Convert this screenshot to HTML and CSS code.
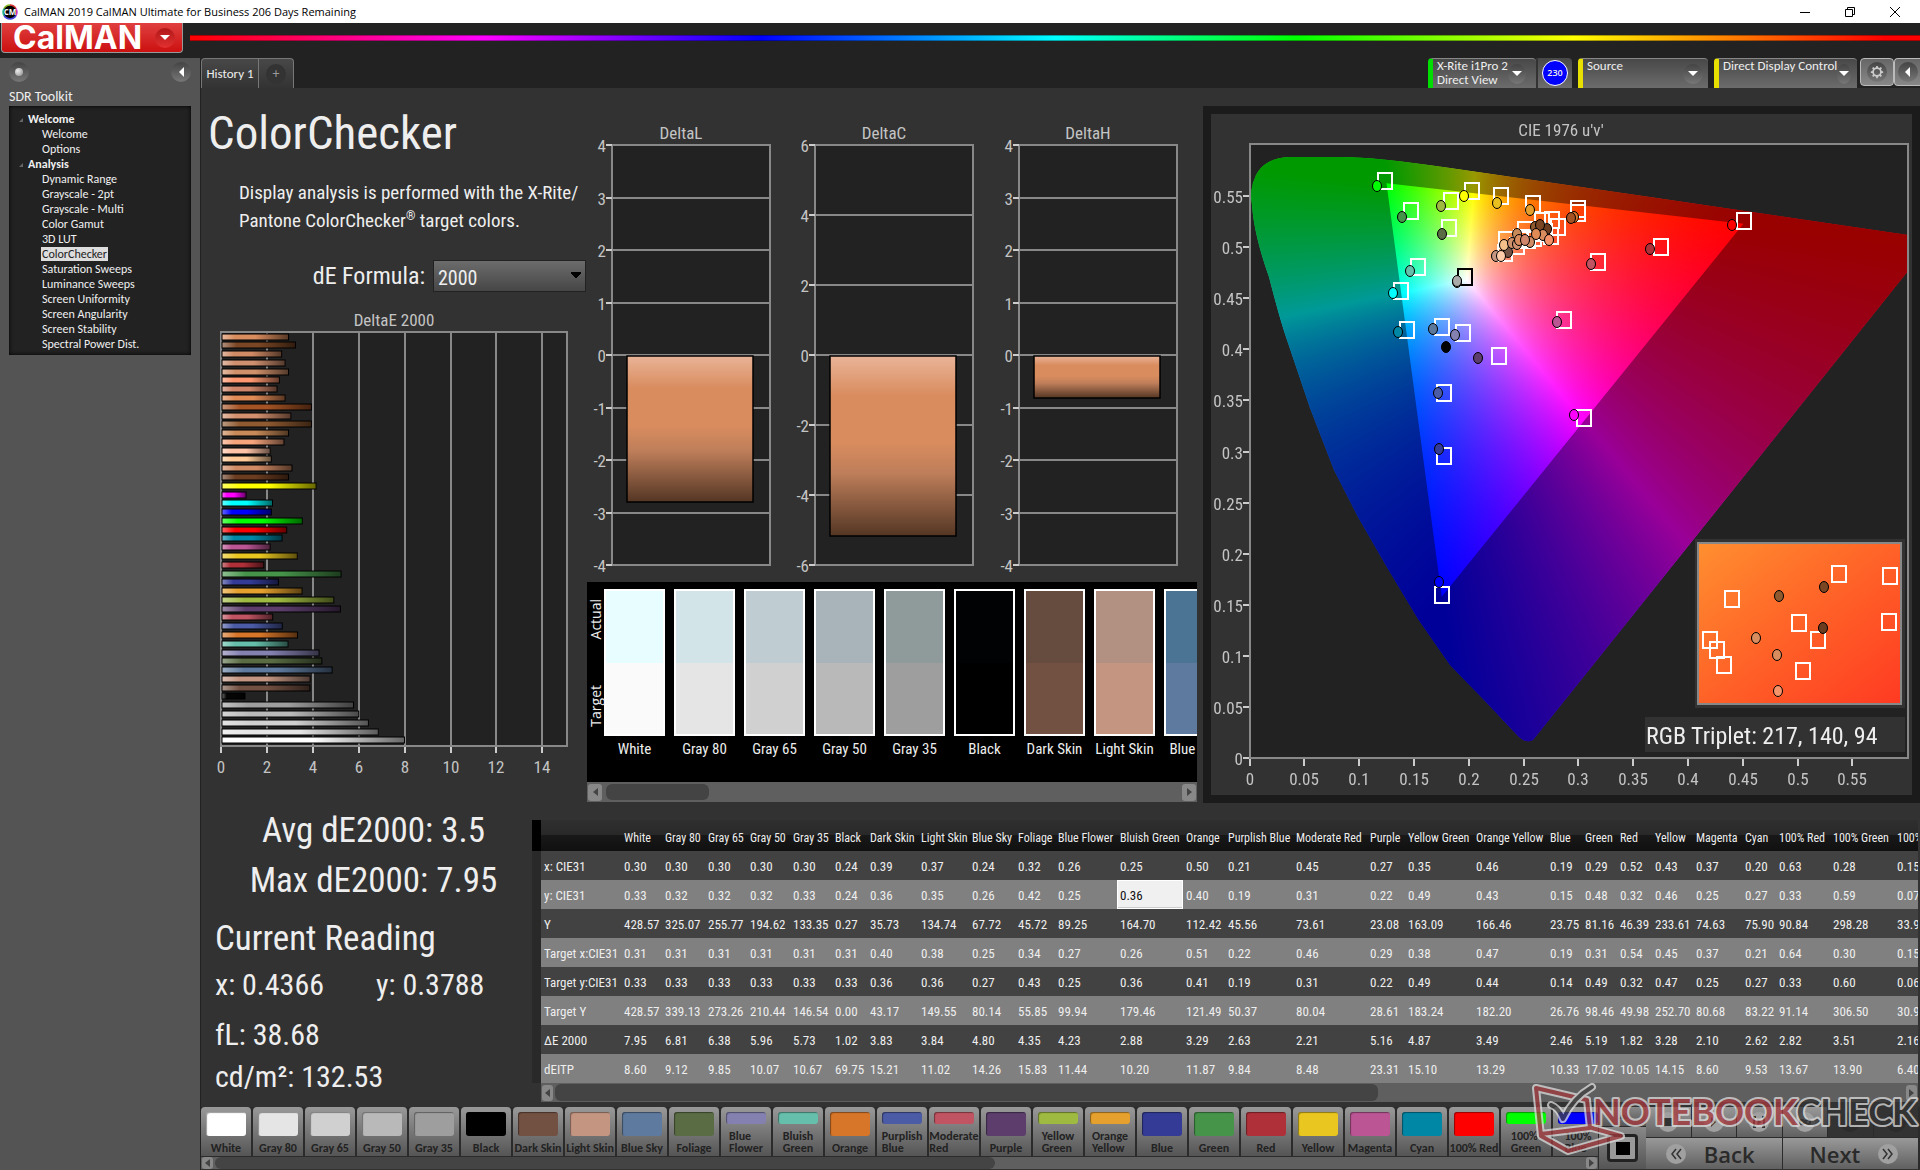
FILE: index.html
```html
<!DOCTYPE html>
<html lang="en">
<head>
<meta charset="utf-8">
<title>CalMAN 2019 CalMAN Ultimate for Business</title>
<link rel="stylesheet" href="styles.css">
</head>
<body>
<header class="titlebar">
  <svg class="app-icon" viewBox="0 0 16 16" aria-hidden="true">
    <circle cx="8" cy="8" r="7" fill="#000"/>
    <g fill="none" stroke-width="1.5"><path d="M8 1a7 7 0 0 1 6 3.500" stroke="#d33"/><path d="M14 4.500a7 7 0 0 1 0 7" stroke="#c3c"/><path d="M14 11.500a7 7 0 0 1-12 0" stroke="#44d"/><path d="M2 11.500a7 7 0 0 1 0-7" stroke="#2b8"/><path d="M2 4.500A7 7 0 0 1 8 1" stroke="#8b2"/></g>
    <text x="8" y="11" text-anchor="middle" class="app-icon-text">CM</text>
  </svg>
  <span class="window-title">CalMAN 2019 CalMAN Ultimate for Business 206 Days Remaining</span>
  <div class="window-buttons">
    <button type="button" aria-label="Minimize"><svg viewBox="0 0 12 12"><path d="M1 6.500h10" /></svg></button>
    <button type="button" aria-label="Restore"><svg viewBox="0 0 12 12"><path d="M1.500 3.500h7v7h-7zM3.500 3.500v-2h7v7h-2"/></svg></button>
    <button type="button" aria-label="Close"><svg viewBox="0 0 12 12"><path d="M1 1l10 10M11 1L1 11"/></svg></button>
  </div>
</header>

<div class="brandbar">
  <button type="button" class="brand">CalMAN <span class="round brand-arrow"><i class="down"></i></span></button>
  <div class="rainbow"></div>
</div>

<div class="shell">
  <aside class="sidebar">
    <div class="sidebar-top">
      <span class="round"><i class="bead"></i></span>
      <button type="button" class="round" aria-label="Collapse sidebar"><i class="left"></i></button>
    </div>
    <h2 class="toolkit">SDR Toolkit</h2>
    <nav class="tree">
      <a class="group" href="#">Welcome</a>
      <a href="#">Welcome</a>
      <a href="#">Options</a>
      <a class="group" href="#">Analysis</a>
      <a href="#">Dynamic Range</a>
      <a href="#">Grayscale - 2pt</a>
      <a href="#">Grayscale - Multi</a>
      <a href="#">Color Gamut</a>
      <a href="#">3D LUT</a>
      <a href="#"><span class="current">ColorChecker</span></a>
      <a href="#">Saturation Sweeps</a>
      <a href="#">Luminance Sweeps</a>
      <a href="#">Screen Uniformity</a>
      <a href="#">Screen Angularity</a>
      <a href="#">Screen Stability</a>
      <a href="#">Spectral Power Dist.</a>
    </nav>
  </aside>

  <div class="main">
    <div class="tabs">
      <button type="button" class="tab">History 1</button>
      <button type="button" class="tab tab-add" aria-label="Add history"><span class="round dim">+</span></button>
      <div class="devices">
        <button type="button" class="device device-meter"><span class="device-name">X-Rite i1Pro 2<br>Direct View</span><span class="round"><i class="down"></i></span></button>
        <span class="count"><b>230</b></span>
        <button type="button" class="device device-source"><span class="device-name">Source</span><span class="round"><i class="down"></i></span></button>
        <button type="button" class="device device-display"><span class="device-name">Direct Display Control</span><span class="round"><i class="down"></i></span></button>
        <button type="button" class="square" aria-label="Settings"><span class="round"><svg viewBox="0 0 16 16" class="gear"><circle cx="8" cy="8" r="4.500"/><path d="M8 1v2.500M8 12.500V15M1 8h2.500M12.500 8H15M3 3l1.800 1.800M11.200 11.200L13 13M13 3l-1.800 1.800M4.800 11.200L3 13"/></svg></span></button>
        <button type="button" class="square square-end" aria-label="Collapse"><span class="round"><i class="left"></i></span></button>
      </div>
    </div>

    <main class="top">
      <section class="intro">
        <h1>ColorChecker</h1>
        <p>Display analysis is performed with the X-Rite/<br>Pantone ColorChecker<sup>®</sup> target colors.</p>
        <div class="formula">
          <label for="formula">dE Formula:</label>
          <select id="formula"><option>2000</option></select>
        </div>
        <svg id="delta-e" class="chart" viewBox="201 308 386 490" role="img" aria-label="DeltaE 2000"></svg>
      </section>
      <section class="deltas">
        <svg id="delta-lch" class="chart" viewBox="587 88 616 494" role="img" aria-label="DeltaL, DeltaC, DeltaH"></svg>
        <div class="compare">
          <div class="compare-sides"><span>Actual</span><span>Target</span></div>
          <div class="compare-list" id="compare"></div>
        </div>
        <div class="scroll scroll-big"><button type="button" aria-label="Scroll left"><i class="left"></i></button><div class="track"><div class="thumb thumb-compare"></div></div><button type="button" aria-label="Scroll right"><i class="right"></i></button></div>
      </section>
      <section class="cie">
        <canvas id="gamut" width="717" height="697"></canvas>
        <svg id="cie" viewBox="1203 106 717 697" role="img" aria-label="CIE 1976 u'v'"></svg>
      </section>
    </main>

    <section class="bottom">
      <div class="readings">
        <div class="stat">Avg dE2000: 3.5</div>
        <div class="stat">Max dE2000: 7.95</div>
        <h2>Current Reading</h2>
        <div class="pair"><span>x: 0.4366</span><span>y: 0.3788</span></div>
        <div class="value value-spaced">fL: 38.68</div>
        <div class="value">cd/m²: 132.53</div>
      </div>
      <div class="data">
        <div class="data-clip"><table id="data"></table></div>
        <div class="scroll scroll-data"><button type="button" aria-label="Scroll left"><i class="left"></i></button><div class="track"><div class="thumb thumb-data"></div></div><button type="button" aria-label="Scroll right"><i class="right"></i></button></div>
      </div>
    </section>

    <footer class="footer">
      <div class="patches">
        <div class="patch-list" id="patches"></div>
        <div class="scroll"><button type="button" aria-label="Scroll left"><i class="left"></i></button><div class="track"><div class="thumb thumb-patches"></div></div><button type="button" aria-label="Scroll right"><i class="right"></i></button></div>
      </div>
      <div class="window-tools">
        <button type="button" class="tool-up" aria-label="Expand"><i class="up"></i></button>
        <button type="button" class="tool-stop" aria-label="Pattern window"><i class="pattern"></i></button>
      </div>
      <div class="transport">
        <div class="transport-row">
          <button type="button" aria-label="Stop"><span class="round"><i class="stop"></i></span></button>
          <button type="button" aria-label="Play"><span class="round"><i class="right"></i></span></button>
          <button type="button" aria-label="Read series"><span class="round"><svg viewBox="0 0 14 14"><path d="M4 2H2v10h2M10 2h2v10h-2" fill="none" stroke="#333" stroke-width="2"/><path d="M5.500 4l4 3-4 3z" fill="#333"/></svg></span></button>
          <button type="button" aria-label="Loop"><span class="round"><svg viewBox="0 0 14 14"><path d="M7 7c-2-3-5-3-5 0s3 3 5 0 5-3 5 0-3 3-5 0" fill="none" stroke="#333" stroke-width="2"/></svg></span></button>
          <button type="button" class="off" aria-label="Refresh"><span class="round dim"></span></button>
          <button type="button" class="off" aria-label="Record"><span class="round dim"></span></button>
        </div>
        <div class="transport-nav">
          <button type="button"><span class="round"><svg viewBox="0 0 14 14"><path d="M7 2L3 7l4 5M12 2L8 7l4 5" fill="none" stroke="#333" stroke-width="1.500"/></svg></span>Back</button>
          <button type="button">Next<span class="round"><svg viewBox="0 0 14 14"><path d="M2 2l4 5-4 5M7 2l4 5-4 5" fill="none" stroke="#333" stroke-width="1.500"/></svg></span></button>
        </div>
      </div>
      <svg class="watermark" viewBox="1520 1078 400 84" aria-hidden="true">
        <g fill="none" stroke-linejoin="round" stroke-linecap="round">
          <path d="M1587 1101L1536 1089L1541 1137L1568 1152L1621 1137L1592 1129M1541 1135L1590 1129L1587 1101" stroke="#ddd" stroke-width="8"/>
          <path d="M1587 1101L1536 1089L1541 1137L1568 1152L1621 1137L1592 1129M1541 1135L1590 1129L1587 1101" stroke="#a33a3e" stroke-width="4"/>
          <path d="M1551 1106c6 2 9 6 12 14c6-13 15-24 29-32" stroke="#ddd" stroke-width="8"/>
          <path d="M1551 1106c6 2 9 6 12 14c6-13 15-24 29-32" stroke="#444" stroke-width="4"/>
        </g>
        <text x="1593" y="1126" class="mark-text"><tspan fill="#a8393e">NOTEBOOK</tspan><tspan fill="#333">CHECK</tspan></text>
      </svg>
    </footer>
  </div>
</div>
<script src="app.js"></script>
</body>
</html>
```
FILE: styles.css
```css
:root {
  --cond: "Roboto Condensed", Roboto, "Liberation Sans", sans-serif;
  --ui: Carlito, Lato, "Open Sans", sans-serif;
}
* { box-sizing: border-box; }
body {
  margin: 0;
  min-height: 100vh;
  display: flex;
  flex-direction: column;
  background: #222;
  color: #eee;
  font-family: var(--ui);
  overflow-x: hidden;
}
button {
  font: inherit;
  color: inherit;
  border: 0;
  padding: 0;
  background: none;
}
h1, h2, p { margin: 0; font-weight: 400; }
svg text { font-family: var(--cond); }

/* window title */
.titlebar { height: 23px; display: flex; align-items: center; gap: 6px; padding-left: 2px; background: #fff; color: #000; }
.app-icon { width: 16px; height: 16px; }
.app-icon .app-icon-text { font: 700 8px "Open Sans", sans-serif; fill: #fff; }
.window-title { font: 11px/16px "Open Sans", sans-serif; flex: 1; }
.window-buttons { display: flex; gap: 33px; padding-right: 19px; }
.window-buttons svg { display: block; width: 12px; height: 12px; fill: none; stroke: #000; }

/* brand strip */
.brandbar { height: 35px; display: flex; gap: 7px; }
.brand {
  width: 182px; height: 30px; margin-left: 1px; padding: 0 7px 0 11px;
  display: flex; align-items: center; justify-content: space-between;
  background: linear-gradient(#e04040, #cc1010);
  border: 1px solid #999; border-top: 0; border-radius: 0 0 4px 4px;
  font: 700 32px/28px Inter, "Open Sans", sans-serif; color: #fff;
}
.rainbow {
  flex: 1; height: 6px; margin-top: 12px;
  background: linear-gradient(90deg, #f00, #f0f 17%, #00f 33%, #0ff 50%, #0f0 64%, #ff0 80%, #f00 98%);
  border-block: 1px solid #0005;
}

/* small round badge and arrows */
.round { width: 20px; height: 20px; border-radius: 50%; display: grid; place-items: center; background: linear-gradient(#444, #777); }
.round svg { width: 14px; height: 14px; }
.round.dim { background: #333; color: #999; font-size: 14px; line-height: 14px; }
.brand-arrow { background: linear-gradient(#b01818, #e23030); }
.bead { width: 8px; height: 8px; border-radius: 50%; background: radial-gradient(circle at 35% 35%, #eee, #888); }
.down { border: 5px solid transparent; border-top-color: #fff; border-bottom: 0; }
.up { border: 5px solid transparent; border-bottom-color: #444; border-top: 0; }
.left { border: 5px solid transparent; border-right-color: #fff; border-left: 0; }
.right { border: 5px solid transparent; border-left-color: #333; border-right: 0; }

.shell { flex: 1; display: grid; grid-template-columns: 200px minmax(0, 1fr); }

/* sidebar */
.sidebar { background: #545454; padding: 4px 9px; }
.sidebar-top { display: flex; justify-content: space-between; height: 20px; }
.toolkit { font-size: 14px; line-height: 16px; margin: 7px 0 1px; }
.tree { height: 249px; display: flex; flex-direction: column; padding: 6px 0 5px; background: #222; box-shadow: inset 0 0 4px #000; }
.tree a { flex: 1; padding-left: 33px; color: #f0f0f0; text-decoration: none; font-size: 12px; line-height: 15px; }
.tree .group { padding-left: 10px; font-weight: 700; display: flex; align-items: center; gap: 5px; }
.tree .group::before { content: ""; border: 2px solid transparent; border-right-color: #666; border-bottom-color: #666; }
.current { display: inline-block; background: #ddd; color: #222; line-height: 14px; padding: 0 1px; margin-left: -1px; }

/* tabs and devices */
.main { display: flex; flex-direction: column; background: #323232; border-left: 1px solid #222; }
.tabs { height: 30px; display: flex; background: #222; }
.tab { width: 58px; border: 1px solid #777; border-bottom: 0; border-radius: 4px 0 0 0; background: linear-gradient(#484848, #333); font-size: 13px; }
.tab-add { width: 35px; border-left: 0; border-radius: 0 4px 0 0; display: grid; place-items: center; }
.devices { margin-left: auto; display: flex; }
.device { display: flex; align-items: center; padding: 0 10px 0 4px; border-left: 5px solid #e8e000; border-top: 1px solid #888; background: linear-gradient(#484848, #6c6c6c); font-size: 13px; line-height: 14px; text-align: left; border-radius: 4px 4px 0 0; }
.device-name { flex: 1; align-self: flex-start; white-space: nowrap; }
.device-meter { width: 108px; border-left-color: #0d0; }
.device-source { width: 130px; margin-left: 6px; padding-right: 5px; }
.device-display { width: 143px; margin-left: 6px; padding-right: 6px; }
.count { width: 36px; border-left: 2px solid #333; background: linear-gradient(#484848, #6c6c6c); display: grid; place-items: center; border-radius: 0 4px 0 0; }
.count b { width: 26px; height: 26px; border-radius: 50%; border: 1px solid #fff; background: #00f; font: 600 9px/24px "Open Sans", sans-serif; text-align: center; }
.square { width: 34px; height: 28px; margin-left: 3px; border: 1px solid #bbb; border-radius: 4px; background: linear-gradient(#666, #888); display: grid; place-items: center; }
.square-end { width: 26px; margin-left: 0; border-right: 0; border-radius: 4px 0 0 4px; }
.gear { fill: none; stroke: #ccc; stroke-width: 2; }

/* upper workspace */
.top { display: grid; grid-template-columns: 386fr 616fr 717fr; }
.top > section { min-width: 0; }
.chart { display: block; width: 100%; }
.intro { padding-top: 17px; }
.intro h1 { font: 47px/56px var(--cond); padding-left: 7px; }
.intro p { font: 19px/28px var(--cond); margin-top: 18px; padding-left: 38px; white-space: nowrap; }
.intro sup { font-size: 12px; line-height: 12px; }
.formula { display: flex; justify-content: flex-end; align-items: center; gap: 8px; margin: 25px 1px 16px 0; font: 24px/32px var(--cond); }
.formula select {
  width: 153px; height: 32px; padding: 3px 4px 0; border: 1px solid #222; border-radius: 0; appearance: none; color: #eee;
  font: 20px/26px var(--cond);
  background: linear-gradient(45deg, transparent 50%, #000 50%) 137px 11px / 5px 8px no-repeat,
    linear-gradient(-45deg, transparent 50%, #000 50%) 142px 11px / 5px 8px no-repeat, linear-gradient(#6c6c6c, #464646);
}
.title { fill: #c4c4c4; font-size: 17px; text-anchor: middle; }
.tick { fill: #c4c4c4; font-size: 17px; }
.mid { text-anchor: middle; }
.end { text-anchor: end; }
.plot { fill: #222; stroke: #888; stroke-width: 2; }
.grid { stroke: #888; stroke-width: 1; }
.grid-strong { stroke: #888; stroke-width: 2; }
.tickmark { stroke: #ccc; stroke-width: 2; }

.deltas { padding-right: 6px; }
.deltas .chart { width: calc(100% + 6px); }
.compare { height: 200px; display: flex; background: #000; overflow: hidden; }
.compare-sides { width: 17px; flex: none; padding: 17px 0 55px; display: flex; flex-direction: column; justify-content: space-between; align-items: center; }
.compare-sides span { writing-mode: vertical-rl; transform: rotate(180deg); font: 14px/17px "Open Sans", sans-serif; }
.compare-list { display: flex; gap: 9px; padding-top: 7px; }
.pair-swatch { width: 61px; flex: none; text-align: center; font: 15px/26px var(--cond); white-space: nowrap; }
.pair-swatch div { height: 147px; border: 2px solid #fff; }

/* scroll bars */
.scroll { height: 12px; display: flex; align-items: center; background: #5f5f5f; padding: 0 1px; gap: 2px; }
.scroll button { width: 11px; height: 12px; border-radius: 3px; background: #888; display: grid; place-items: center; }
.scroll .left { border-right-color: #444; border-width: 4px 5px 4px 0; }
.scroll .right { border-left-color: #444; border-width: 4px 0 4px 5px; }
.track { flex: 1; height: 100%; }
.thumb { height: 100%; background: #444; border-radius: 6px; }
.scroll-big { height: 20px; }
.scroll-big button { width: 14px; height: 17px; }
.scroll-big .track { padding: 2px; }
.scroll-data { height: 19px; margin-left: 9px; }
.scroll-data button { height: 16px; }
.scroll-data .track { padding: 1px 0; }
.thumb-compare { width: 18%; }
.thumb-data { width: 61%; }
.thumb-patches { width: 57%; }

/* CIE panel */
.cie { display: grid; margin: 18px 0 3px; border: 0; background: #323232; }
.cie canvas, .cie svg { grid-area: 1 / 1; width: 100%; display: block; }
.frame { fill: none; stroke: #1b1b1b; stroke-width: 8; }
.target { fill: none; stroke: #fff; stroke-width: 2; }
.target-white { stroke: #000; }
.actual { stroke: #000; stroke-width: 1; }
.triplet { fill: #eee; font-size: 24px; }

/* readings and data table */
.bottom { display: grid; grid-template-columns: 331px minmax(0, 1fr); height: 301px; }
.readings { font: 30px/40px var(--cond); padding-left: 14px; }
.readings .stat { font-size: 35px; line-height: 50px; text-align: center; }
.readings h2 { font-size: 35px; line-height: 49px; margin: 8px 0 2px; }
.pair { display: flex; gap: 52px; }
.value-spaced { margin: 10px 0 2px; }
.data { padding: 14px 2px 0 0; }
.data-clip { overflow: hidden; }
table { table-layout: fixed; width: 1400px; border-spacing: 0; font: 13px/28px var(--cond); }
th, td { padding: 2px 0 0 3px; height: 29px; text-align: left; font-weight: 400; white-space: nowrap; line-height: 27px; }
tbody :is(th, td) { padding-top: 3px; line-height: 26px; }
thead th { height: 31px; padding-top: 5px; line-height: 26px; background: linear-gradient(#2f2f2f, #282828 50%, #181818 50%, #101010); font-size: 12px; }
tbody tr { background: #424242; }
tbody tr:nth-child(even) { background: #808080; }
tr > :first-child { border-left: 9px solid #292929; }
thead tr > :first-child { border-left-color: #000; }
.picked { background: #f0f0f0; color: #111; box-shadow: inset 0 0 0 1px #fff, inset 0 -2px #ccc; }

/* footer */
.footer { position: relative; height: 62px; display: flex; background: #2b2b2b; }
.patches { flex: 1; min-width: 0; display: flex; flex-direction: column; }
.patch-list { height: 50px; display: flex; gap: 2px; overflow: hidden; }
.patch {
  width: 50px; height: 49px; flex: none; padding: 5px 0 2px; display: flex; flex-direction: column; align-items: center; justify-content: space-between;
  background: linear-gradient(#999, #555); border-radius: 4px 4px 0 0; color: #222;
  font: 700 12px/12px var(--ui); text-align: left; white-space: nowrap; overflow: hidden;
}
.patch i { width: 40px; flex: 1; margin-bottom: 6px; border-radius: 3px; box-shadow: inset 1px 1px 1px #0006; }
.window-tools { width: 48px; display: grid; grid-template-rows: 19px 1fr; gap: 1px; padding-left: 1px; }
.window-tools button { background: linear-gradient(#888, #555); display: grid; place-items: center; }
.pattern { width: 31px; height: 28px; border: 3px solid #222; border-radius: 4px; background: linear-gradient(#000, #000) center / 14px 13px no-repeat, #999; }
.transport { width: 274px; display: grid; grid-template-rows: 30px 1fr; gap: 1px; padding-right: 2px; }
.transport-row { display: grid; grid-template-columns: repeat(6, 1fr); gap: 1px; }
.transport-nav { display: grid; grid-template-columns: 1fr 1fr; gap: 1px; font: 600 22px/30px "Open Sans", sans-serif; color: #2a2a2a; }
.transport button { background: linear-gradient(#999, #606060); display: flex; align-items: center; justify-content: center; }
.transport-nav button { justify-content: space-between; }
.transport-nav button:first-child { padding: 0 27px 0 20px; }
.transport-nav button:last-child { padding: 0 20px 0 27px; }
.transport .off { background: #333; }
.transport .round { background: #a0a0a0; }
.transport .round.dim { background: #2c2c2c; }
.stop { width: 8px; height: 8px; background: #333; }
.watermark { position: absolute; right: 0; bottom: 8px; width: 400px; height: 84px; opacity: .75; pointer-events: none; }
.watermark .mark-text { font: 700 36px Lato, "Open Sans", sans-serif; paint-order: stroke; stroke: #ddd; stroke-width: 4px; stroke-linejoin: round; }
```
FILE: app.js
```js
const el = (id) => document.getElementById(id);

// name, target colour, measured colour
const patches = [
  ["White", "#fafafa", "#e8fdff"], ["Gray 80", "#e5e5e5", "#d2e4e8"], ["Gray 65", "#d0d0d0", "#bfccd1"],
  ["Gray 50", "#b9b9b9", "#a8b4b9"], ["Gray 35", "#9e9e9e", "#8f9a9b"], ["Black", "#000", "#010204"],
  ["Dark Skin", "#735142", "#654c3e"], ["Light Skin", "#c49682", "#b29182"], ["Blue Sky", "#5e7a9e", "#4b7394"],
  ["Foliage", "#596c43"], ["Blue Flower", "#8480b0"], ["Bluish Green", "#65bfaa"], ["Orange", "#d77628"],
  ["Purplish Blue", "#4b5ba6"], ["Moderate Red", "#c15462"], ["Purple", "#5c3d6c"], ["Yellow Green", "#9fba40"],
  ["Orange Yellow", "#e5a02e"], ["Blue", "#333b96"], ["Green", "#46944a"], ["Red", "#af3039"], ["Yellow", "#eac720"],
  ["Magenta", "#bb5594"], ["Cyan", "#0087a6"], ["100% Red", "#f00"], ["100% Green", "#0f0"], ["100% Blue", "#00f"]
];

el("compare").innerHTML = patches.slice(0, 9).map(([name, target, actual]) =>
  `<div class="pair-swatch"><div style="background:linear-gradient(${actual} 50%,${target} 50%)"></div>${name}</div>`).join("");

el("patches").innerHTML = patches.map(([name, color], i) => {
  const split = i > 9 && name.includes(" ") && name !== "100% Red";
  return `<button type="button" class="patch"><i style="background:${i ? color : "#fff"}"></i><span>${split ? name.replace(" ", "<br>") : name}</span></button>`;
}).join("");

// data table
const widths = [89, 41, 43, 42, 43, 42, 35, 51, 51, 46, 40, 62, 66, 42, 68, 74, 38, 68, 74, 35, 35, 35, 41, 49, 34, 54, 64, 38];
const rows = {
  "x: CIE31": "0.30 0.30 0.30 0.30 0.30 0.24 0.39 0.37 0.24 0.32 0.26 0.25 0.50 0.21 0.45 0.27 0.35 0.46 0.19 0.29 0.52 0.43 0.37 0.20 0.63 0.28 0.15",
  "y: CIE31": "0.33 0.32 0.32 0.32 0.33 0.24 0.36 0.35 0.26 0.42 0.25 0.36 0.40 0.19 0.31 0.22 0.49 0.43 0.15 0.48 0.32 0.46 0.25 0.27 0.33 0.59 0.07",
  "Y": "428.57 325.07 255.77 194.62 133.35 0.27 35.73 134.74 67.72 45.72 89.25 164.70 112.42 45.56 73.61 23.08 163.09 166.46 23.75 81.16 46.39 233.61 74.63 75.90 90.84 298.28 33.9",
  "Target x:CIE31": "0.31 0.31 0.31 0.31 0.31 0.31 0.40 0.38 0.25 0.34 0.27 0.26 0.51 0.22 0.46 0.29 0.38 0.47 0.19 0.31 0.54 0.45 0.37 0.21 0.64 0.30 0.15",
  "Target y:CIE31": "0.33 0.33 0.33 0.33 0.33 0.33 0.36 0.36 0.27 0.43 0.25 0.36 0.41 0.19 0.31 0.22 0.49 0.44 0.14 0.49 0.32 0.47 0.25 0.27 0.33 0.60 0.06",
  "Target Y": "428.57 339.13 273.26 210.44 146.54 0.00 43.17 149.55 80.14 55.85 99.94 179.46 121.49 50.37 80.04 28.61 183.24 182.20 26.76 98.46 49.98 252.70 80.68 83.22 91.14 306.50 30.9",
  "ΔE 2000": "7.95 6.81 6.38 5.96 5.73 1.02 3.83 3.84 4.80 4.35 4.23 2.88 3.29 2.63 2.21 5.16 4.87 3.49 2.46 5.19 1.82 3.28 2.10 2.62 2.82 3.51 2.16",
  "dEITP": "8.60 9.12 9.85 10.07 10.67 69.75 15.21 11.02 14.26 15.83 11.44 10.20 11.87 9.84 8.48 23.31 15.10 13.29 10.33 17.02 10.05 14.15 8.60 9.53 13.67 13.90 6.40"
};
el("data").innerHTML =
  `<colgroup>${widths.map((w) => `<col style="width:${w}px">`).join("")}</colgroup>` +
  `<thead><tr><th></th>${patches.map(([name]) => `<th>${name}</th>`).join("")}</tr></thead><tbody>` +
  Object.entries(rows).map(([label, values]) =>
    `<tr><th>${label}</th>${values.split(" ").map((v, i) => `<td${label === "y: CIE31" && i === 11 ? ' class="picked"' : ""}>${v}</td>`).join("")}</tr>`).join("") +
  "</tbody>";

// DeltaE 2000 bars, top to bottom
const bars = "2.9 d98c5e,3.2 7a4624,2.6 d08a64,2.75 cf9070,2.9 d0906a,2.5 ff9870,2.4 cf866a,2.75 e08a56,3.9 a55324,3 d4906e,3.9 8f5a30,2.9 c88a58,2.7 f5a47c,2.1 ffc4a8,2.15 ffca98,3.05 d08a64,2.9 6b3c20,4.1 ffff00,1.05 ff00ff,2.2 00ffff,2.15 0000ff,3.5 00ff00,2.82 ff0000,2.62 0087a6,2.1 bb5594,3.28 eac720,1.82 af3039,5.19 46944a,2.46 333b96,3.49 e5a02e,4.87 9fba40,5.16 5c3d6c,2.21 c15462,2.63 4b5ba6,3.29 d77628,2.88 65bfaa,4.23 8480b0,4.35 596c43,4.8 5e7a9e,3.84 c49682,3.83 735142,1 050505,5.73 9e9e9e,5.96 b9b9b9,6.38 d0d0d0,6.81 e5e5e5,7.95 ffffff"
  .split(",").map((s) => s.split(" "));
let out = `<defs><linearGradient id="shade-x"><stop offset="0" stop-color="#fff" stop-opacity=".4"/><stop offset=".2" stop-color="#fff" stop-opacity="0"/><stop offset=".5" stop-opacity="0"/><stop offset="1" stop-opacity=".6"/></linearGradient></defs>
<text class="title" x="394" y="326">DeltaE 2000</text><rect class="plot" x="221" y="332" width="346" height="414"/>`;
for (let v = 0; v < 15; v += 2) {
  const x = Math.round(221 + v * 22.95);
  if (v) out += `<path class="grid-strong" d="M${x} 333V745"/>`;
  out += `<path class="tickmark" d="M${x} 747v6"/><text class="tick mid" x="${x}" y="773">${v}</text>`;
}
bars.forEach(([v, c], i) => {
  const y = Math.round(336.5 + i * 8.78) - 3, w = v * 22.95;
  out += `<rect x="222" y="${y}" width="${w}" height="6" fill="#${c}"/><rect x="222" y="${y}" width="${w}" height="6" fill="url(#shade-x)" stroke="#000"/>`;
});
el("delta-e").innerHTML = out;

// DeltaL / DeltaC / DeltaH
out = `<defs><linearGradient id="shade-y" x2="0" y2="1"><stop offset="0" stop-color="#e9b498"/><stop offset=".22" stop-color="#d98c5e"/><stop offset=".48" stop-color="#d98c5e"/><stop offset=".65" stop-color="#be7e5a"/><stop offset="1" stop-color="#543624"/></linearGradient></defs>`;
[["DeltaL", 612, 4, 1, 502], ["DeltaC", 815, 6, 2, 536], ["DeltaH", 1019, 4, 1, 398]].forEach(([name, x, max, step, end]) => {
  out += `<text class="title" x="${x + 69}" y="139">${name}</text><rect class="plot" x="${x}" y="145" width="158" height="420"/>`;
  for (let v = max; v >= -max; v -= step) {
    const y = Math.round(145 + (max - v) * 420 / (2 * max));
    out += `<path class="grid-strong" d="M${x} ${y}h158"/><path class="tickmark" d="M${x - 6} ${y}h6"/><text class="tick end" x="${x - 6}" y="${y + 7}">${v}</text>`;
  }
  out += `<rect x="${x + 15}" y="356" width="126" height="${end - 356}" fill="url(#shade-y)" stroke="#000" stroke-width="1.500"/>`;
});
el("delta-lch").innerHTML = out;

// CIE 1976 diagram: spectral locus and sRGB triangle
const ux = (u) => 1249.5 + u * 1096, vy = (v) => 758.3 - v * 1022.4;
const locus = new Path2D("M1533 740 L1765 450 L1908 271 V235 L1650 197 L1450 168 Q1375 157 1342 157 H1289 Q1265 158 1256 175 Q1249 190 1252 205 Q1254 235 1269 277 Q1280 320 1287 340 L1310 408 L1334 470 L1358 517 L1388 569 L1418 619 L1450 665 L1485 701 L1518 736 Q1526 744 1533 740Z");
const triangle = new Path2D(`M${ux(.4507)} ${vy(.5229)} L${ux(.125)} ${vy(.5625)} L${ux(.1754)} ${vy(.1579)}Z`);
const level = (c) => Math.round(255 * Math.max(c, 0));
const W = 717, H = 697, layer = document.createElement("canvas");
layer.width = W; layer.height = H;
const lctx = layer.getContext("2d"), img = lctx.createImageData(W, H);
for (let j = 0; j < H; j++) for (let i = 0; i < W; i++) {
  const u = (i + 1203 - 1249.5) / 1096, v = (758.3 - j - 106) / 1022.4;
  const d = 6 * u - 16 * v + 12, x = 9 * u / d, y = Math.max(4 * v / d, 1e-4);
  const X = x / y, Z = (1 - x - y) / y;
  const r = 3.2406 * X - 1.5372 - .4986 * Z, g = -.9689 * X + 1.8758 + .0415 * Z, b = .0557 * X - .204 + 1.057 * Z;
  const m = Math.max(r, g, b), k = (j * W + i) * 4;
  img.data[k] = level(r / m); img.data[k + 1] = level(g / m); img.data[k + 2] = level(b / m); img.data[k + 3] = 255;
}
lctx.putImageData(img, 0, 0);
const ctx = el("gamut").getContext("2d");
ctx.translate(-1203, -106);
ctx.fillStyle = "#222";
ctx.fillRect(1250, 144, 659, 614);
ctx.save(); ctx.clip(locus); ctx.drawImage(layer, 1203, 106); ctx.restore();
const rim = new Path2D(locus); rim.addPath(triangle);
ctx.save(); ctx.clip(locus); ctx.fillStyle = "rgba(0,0,0,.4)"; ctx.fill(rim, "evenodd"); ctx.restore();

out = `<defs><linearGradient id="inset" x2="1" y2="1"><stop offset="0" stop-color="#ff8f30"/><stop offset=".45" stop-color="#ff6628"/><stop offset="1" stop-color="#ff3a22"/></linearGradient></defs>
<rect class="frame" x="1207" y="110" width="709" height="689"/><rect class="grid-strong" fill="none" x="1250" y="144" width="658" height="614"/><text class="title" x="1561" y="136">CIE 1976 u'v'</text>`;
for (let i = 0; i < 12; i++) {
  const t = String(+(i * .05).toFixed(2)), x = Math.round(ux(i * .05)), y = Math.round(vy(i * .05));
  out += `<path class="tickmark" d="M${x} 759v7M1243 ${y}h6"/><text class="tick mid" x="${x}" y="785">${t}</text><text class="tick end" x="1243" y="${y + 7}">${t}</text>`;
}
const square = (x, y, extra = "") => `<rect class="target ${extra}" x="${x - 7}" y="${y - 8}" width="14" height="16"/>`;
const dot = (x, y, c) => `<ellipse class="actual" cx="${x}" cy="${y}" rx="4.500" ry="5.500" fill="#${c}"/>`;
out += [[1385, 181], [1472, 191], [1501, 196], [1451, 201], [1411, 211], [1449, 228], [1533, 204], [1578, 209], [1578, 213], [1744, 221], [1661, 247], [1598, 262], [1418, 267], [1401, 291], [1407, 330], [1442, 327], [1463, 333], [1499, 356], [1564, 320], [1444, 393], [1584, 418], [1444, 456], [1442, 595], [1542, 221], [1552, 220], [1558, 227], [1525, 230], [1506, 240], [1505, 253], [1517, 246], [1528, 240], [1540, 233], [1534, 238], [1551, 236], [1545, 232], [1521, 238]]
  .map(([x, y]) => square(x, y)).join("") + square(1465, 277, "target-white");
out += "1377 186 0f0,1464 196 ff0,1497 203 e8c020,1441 206 9fba40,1402 217 46944a,1442 234 596c43,1530 210 e5a02e,1574 217 d77628,1571 218 a55324,1732 225 f00,1650 249 af3039,1591 264 c15462,1410 271 65bfaa,1457 282 999,1457 281 aaa,1393 293 0ff,1398 332 0087a6,1433 329 5c799c,1455 335 8480b0,1446 347 000,1478 358 5c3d6c,1557 322 bb5594,1438 393 4b5ba6,1574 415 f0f,1439 449 333b96,1439 582 00f,1496 256 c49682,1508 252 735142,1501 256 ffcba8,1504 245 f5c08a,1512 243 d0906a,1517 234 c88a58,1517 244 cf9070,1530 242 d08a64,1519 240 d98c5e,1525 240 cf866a,1535 227 8f5a30,1547 229 6b3c20,1540 225 7a4624,1543 235 d98c5e,1536 234 e08a56,1549 240 f5946a"
  .split(",").map((s) => dot(...s.split(" "))).join("");
out += `<rect x="1695" y="539" width="210" height="169" fill="#323232"/><rect x="1698" y="543" width="203" height="161" fill="url(#inset)" stroke="#888" stroke-width="2"/>`;
out += [[1839, 574], [1890, 576], [1732, 599], [1799, 623], [1818, 640], [1889, 622], [1710, 640], [1717, 650], [1724, 665], [1803, 671]].map(([x, y]) => square(x, y)).join("");
out += "1824 587 7a4624,1779 596 8f5a30,1823 628 6b3c20,1756 638 d98c5e,1777 655 d98c5e,1778 691 f5946a".split(",").map((s) => dot(...s.split(" "))).join("");
out += `<rect x="1645" y="717" width="260" height="35" fill="#323232"/><text class="triplet" x="1646" y="744">RGB Triplet: 217, 140, 94</text>`;
el("cie").innerHTML = out;
```
